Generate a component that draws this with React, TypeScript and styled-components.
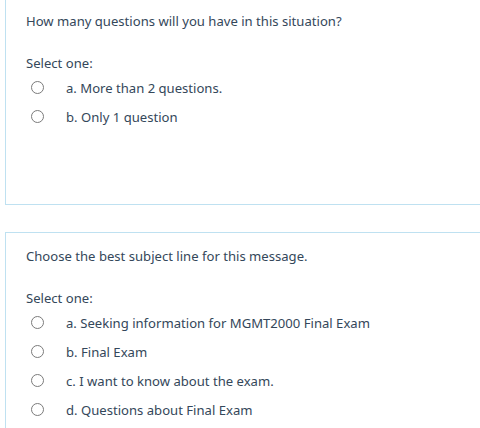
import React from "react";
import styled, { createGlobalStyle } from "styled-components";

const GlobalStyle = createGlobalStyle`
  html, body {
    margin: 0;
    padding: 0;
    background: #ffffff;
    overflow: hidden;
  }
  body {
    font-family: "Segoe UI", "Noto Sans", "Liberation Sans", sans-serif;
    font-size: 13.1px;
    color: #34475a;
  }
`;

type Question = {
  text: string;
  options: string[];
  tail: number;
};

const questions: Question[] = [
  {
    text: "How many questions will you have in this situation?",
    options: ["a. More than 2 questions.", "b. Only 1 question"],
    tail: 73,
  },
  {
    text: "Choose the best subject line for this message.",
    options: [
      "a. Seeking information for MGMT2000 Final Exam",
      "b. Final Exam",
      "c. I want to know about the exam.",
      "d. Questions about Final Exam",
    ],
    tail: 73,
  },
];

const App: React.FC = () => {
  return (
    <>
      <GlobalStyle />
      <Page>
        {questions.map((q) => (
          <Card key={q.text} $tail={q.tail}>
            <Prompt>{q.text}</Prompt>
            <Answer>
              <Legend>Select one:</Legend>
              <Options>
                {q.options.map((o) => (
                  <Option key={o}>
                    <Radio type="radio" name={q.text} />
                    <span>{o}</span>
                  </Option>
                ))}
              </Options>
            </Answer>
          </Card>
        ))}
      </Page>
    </>
  );
};

const Page = styled.div`
  display: flex;
  flex-direction: column;
  gap: 27px;
  margin-top: -3px;
  padding-left: 5px;
  width: 500px;
`;

const Card = styled.div<{ $tail: number }>`
  border: 1px solid #bfe1f1;
  padding: 13px 20px ${(p) => p.$tail}px 20px;
`;

const Prompt = styled.div`
  line-height: 20px;
  margin-bottom: 22px;
`;

const Answer = styled.div`
  display: flex;
  flex-direction: column;
`;

const Legend = styled.div`
  line-height: 20px;
`;

const Options = styled.div`
  display: flex;
  flex-direction: column;
`;

const Option = styled.label`
  display: flex;
  align-items: center;
  height: 29px;

  span {
    line-height: 20px;
  }
`;

const Radio = styled.input`
  appearance: none;
  box-sizing: border-box;
  width: 13px;
  height: 13px;
  margin: 0 22px 0 5px;
  border: 1px solid #7b7b7b;
  border-radius: 50%;
  background: #ffffff;
`;

export default App;
